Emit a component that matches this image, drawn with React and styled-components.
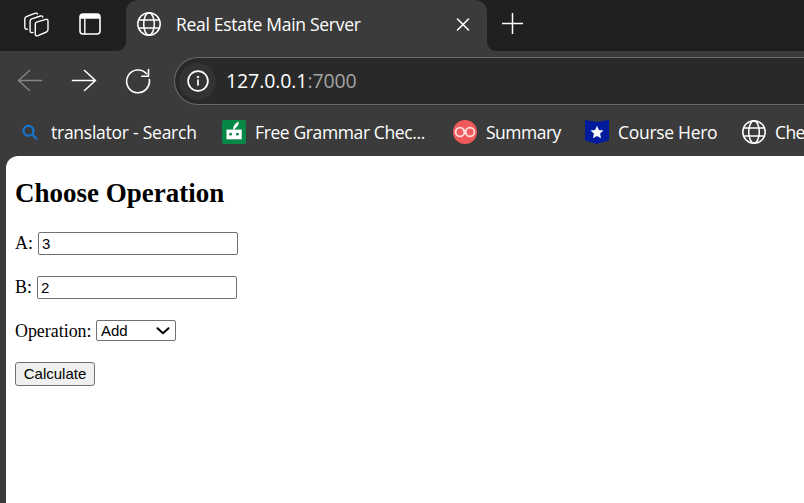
import React from "react";
import styled, { createGlobalStyle } from "styled-components";

const Global = createGlobalStyle`
  * { box-sizing: border-box; }
  body { margin: 0; overflow: hidden; background: #3b3b3b; }
`;

const Browser = styled.div`
  width: 804px;
  height: 503px;
  overflow: hidden;
  display: flex;
  flex-direction: column;
  background: #3b3b3b;
  color: #fff;
  font-family: "Open Sans", "Noto Sans", sans-serif;
  svg { display: block; flex: none; }
`;

const TabStrip = styled.header`
  height: 51px;
  flex: none;
  display: flex;
  background: #3b3b3b;
`;

const StripLeft = styled.div`
  width: 126px;
  display: flex;
  align-items: center;
  gap: 30px;
  padding: 0 0 3px 24px;
  background: #202020;
  border-bottom-right-radius: 9px;
`;

const TabBack = styled.div`
  width: 361px;
  background: linear-gradient(#202020 50%, #3b3b3b 50%);
`;

const Tab = styled.div`
  height: 51px;
  display: flex;
  align-items: center;
  padding: 0 17px 3px 11px;
  background: #3b3b3b;
  border-radius: 12px 12px 0 0;
`;

const TabTitle = styled.span`
  flex: 1;
  margin: -1px 0 0 15px;
  font-size: 17.5px;
  line-height: 24px;
  letter-spacing: -0.3px;
  white-space: nowrap;
`;

const StripRight = styled.div`
  flex: 1;
  display: flex;
  align-items: flex-start;
  padding: 13px 0 0 15px;
  background: #202020;
  border-bottom-left-radius: 9px;
`;

const Toolbar = styled.nav`
  height: 55px;
  flex: none;
  display: flex;
  align-items: center;
  padding: 5px 0 0 17px;
  gap: 28px;
`;

const AddressBar = styled.div`
  flex: 1;
  height: 48px;
  margin-left: -5px;
  display: flex;
  align-items: center;
  padding-left: 4px;
  background: #292929;
  border: 1.5px solid #6a6a6a;
  border-right: 0;
  border-radius: 24px 0 0 24px;
`;

const SiteInfo = styled.div`
  width: 37px;
  height: 37px;
  display: grid;
  place-items: center;
  border-radius: 50%;
  background: #333;
`;

const Url = styled.span`
  margin-left: 10px;
  font-size: 19.5px;
  line-height: 26px;
  letter-spacing: -0.1px;
`;

const Port = styled.span`
  color: #a3a3a3;
`;

const Bookmarks = styled.div`
  height: 50px;
  flex: none;
  display: flex;
  align-items: center;
  padding: 2px 0 0 18px;
`;

const Bookmark = styled.div`
  width: ${(p) => p.$width}px;
  flex: none;
  display: flex;
  align-items: center;
  gap: 9px;
`;

const BookmarkLabel = styled.span`
  margin-top: -1px;
  font-size: 17.5px;
  line-height: 24px;
  letter-spacing: ${(p) => p.$spacing}px;
  white-space: nowrap;
`;

const Page = styled.main`
  flex: 1;
  margin-left: 6px;
  padding: 20px 9px;
  background: #fff;
  color: #000;
  border-top-left-radius: 12px;
  font-family: "Liberation Serif", serif;
  font-size: 17.9px;
`;

const Heading = styled.h2`
  margin: 0;
  height: 56px;
  font-size: 27px;
  line-height: 34px;
`;

const Field = styled.div`
  height: ${(p) => p.$height}px;
  display: flex;
  align-items: flex-start;
  gap: ${(p) => p.$gap}px;
  line-height: 23px;
`;

const NumberInput = styled.input`
  width: 200px;
  height: 23px;
  margin: 0;
  padding: 1px 3px;
  border: 1px solid #707070;
  border-radius: 2px;
  background: #fff;
  color: #000;
  font: 15px "Liberation Sans", sans-serif;
  outline: 0;
`;

const SelectBox = styled.button`
  width: 80px;
  height: 21px;
  margin: 0;
  padding: 0 5px 0 4.5px;
  display: flex;
  align-items: center;
  justify-content: space-between;
  border: 1px solid #707070;
  border-radius: 2px;
  background: #fff;
  color: #000;
  font: 15px/19px "Liberation Sans", sans-serif;
`;

const CalculateButton = styled.button`
  width: 80px;
  height: 24px;
  margin: 0;
  padding: 0;
  border: 1px solid #707070;
  border-radius: 3px;
  background: #efefef;
  color: #000;
  font: 15px/20px "Liberation Sans", sans-serif;
`;

const Icon = ({ w = 24, h = w, box = `0 0 ${w} ${h}`, children, ...rest }) => (
  <svg width={w} height={h} viewBox={box} fill="none" stroke="#fff" strokeWidth="1.4" strokeLinecap="round" strokeLinejoin="round" {...rest}>
    {children}
  </svg>
);

const Globe = () => (
  <Icon strokeWidth="1.5">
    <circle cx="12" cy="12" r="11.2" />
    <ellipse cx="12" cy="12" rx="5.3" ry="11.2" />
    <path d="M1.6 8h20.8M1.6 16h20.8" />
  </Icon>
);

const Workspaces = () => (
  <Icon w={25} h={25}>
    <path d="M12.6 10.2 21.8 7.4Q24 6.9 24 9V17.5Q24 19.2 22.5 20L14 23.7Q11.3 24.5 11.3 22V12Q11.3 10.7 12.6 10.2Z" />
    <path d="M9 20.4Q6.1 21.4 6.1 18.7V9.2Q6.1 7.5 7.7 6.9L16.5 4Q18.6 3.4 18.8 5.2" />
    <path d="M3.5 17.1Q.8 17.7.8 15V7Q.8 5.4 2.3 4.7L10.7 1.4Q13 .6 13.5 2.1" />
  </Icon>
);

const VerticalTabs = () => (
  <Icon w={22} h={22}>
    <rect x="1" y="1" width="20" height="20" rx="3" strokeWidth="1.6" />
    <path d="M1 5.8V4Q1 1 4 1H18Q21 1 21 4V5.8Z" fill="#fff" stroke="none" />
    <path d="M5.8 6V21" />
  </Icon>
);

const SearchMark = () => (
  <Icon stroke="#1677d2" strokeWidth="2.2">
    <circle cx="10.5" cy="10.8" r="5" />
    <path d="m14.5 14.8 4 4" />
  </Icon>
);

const Robot = () => (
  <Icon stroke="none">
    <rect width="24" height="24" rx="2" fill="#078746" />
    <path d="M4.500 9.600H19.700V19.300H4.500Z" fill="#fff" />
    <path d="M11 9.600Q11.200 4 16.800 1.500Q17 5.500 13.300 8.200L12.600 9.600Z" fill="#fff" />
    <circle cx="8.600" cy="14.200" r="1.400" fill="#078746" />
    <circle cx="15.400" cy="14.200" r="1.400" fill="#078746" />
  </Icon>
);

const LinkedRings = () => (
  <Icon strokeWidth="1.800">
    <circle cx="12" cy="12" r="12" fill="#f05a5c" stroke="none" />
    <g stroke="#ffdcdc">
      <circle cx="7" cy="12" r="4.400" />
      <circle cx="17" cy="12" r="4.400" />
      <path d="M10.600 10.200 13.400 13.800" />
    </g>
  </Icon>
);

const Shield = () => (
  <Icon stroke="none">
    <path d="M0 0 12 2 24 0V20.500L12 24 0 20.500Z" fill="#001b9b" />
    <path d="m12 5.700 1.900 4.300 4.600.5-3.400 3.100.9 4.600-4-2.300-4 2.300.9-4.600-3.400-3.100 4.600-.5Z" fill="#fff" />
  </Icon>
);

const bookmarks = [
  { icon: <SearchMark />, label: "translator - Search", width: 204, spacing: -0.25 },
  { icon: <Robot />, label: "Free Grammar Chec...", width: 231, spacing: -0.38 },
  { icon: <LinkedRings />, label: "Summary", width: 132, spacing: -0.5 },
  { icon: <Shield />, label: "Course Hero", width: 157, spacing: -0.3 },
  { icon: <Globe />, label: "Che", width: 64, spacing: -0.6 },
];

export default function App() {
  return (
    <Browser>
      <Global />
      <TabStrip>
        <StripLeft>
          <Workspaces />
          <VerticalTabs />
        </StripLeft>
        <TabBack>
          <Tab>
            <Globe />
            <TabTitle>Real Estate Main Server</TabTitle>
            <Icon w={14} strokeWidth="1.6"><path d="m1.500 2 11 11m0-11-11 11" /></Icon>
          </Tab>
        </TabBack>
        <StripRight>
          <Icon w={21} strokeWidth="1.500"><path d="M10.500 0v21M0 10.500h21" strokeLinecap="butt" /></Icon>
        </StripRight>
      </TabStrip>
      <Toolbar>
        <Icon w={26} stroke="#858585" strokeWidth="1.500"><path d="M24.500 12.500H1.500M12.500 2.500 1.500 12.500l11 10" /></Icon>
        <Icon w={26} strokeWidth="1.600"><path d="M1.500 12.500h23M13.500 2.500l11 10-11 10" /></Icon>
        <Icon w={26} strokeWidth="1.600"><path d="M24.300 11.500A11.400 11.400 0 1 1 21.500 5.700M23.500 1.500v6.700h-6.700" /></Icon>
        <AddressBar>
          <SiteInfo>
            <Icon w={22} strokeWidth="1.700"><circle cx="11" cy="11" r="9.900" /><path d="M11 10v5" /><circle cx="11" cy="7" r=".4" /></Icon>
          </SiteInfo>
          <Url>127.0.0.1<Port>:7000</Port></Url>
        </AddressBar>
      </Toolbar>
      <Bookmarks>
        {bookmarks.map((b) => (
          <Bookmark key={b.label} $width={b.width}>
            {b.icon}
            <BookmarkLabel $spacing={b.spacing}>{b.label}</BookmarkLabel>
          </Bookmark>
        ))}
      </Bookmarks>
      <Page>
        <Heading>Choose Operation</Heading>
        <Field $height={44} $gap={5}>A: <NumberInput aria-label="A" defaultValue="3" /></Field>
        <Field $height={44} $gap={5}>B: <NumberInput aria-label="B" defaultValue="2" /></Field>
        <Field $height={42} $gap={4}>
          Operation:
          <SelectBox type="button">
            Add
            <Icon w={14} h={8} stroke="#000" strokeWidth="2"><path d="m1.500 1.200 5.500 5 5.500-5" /></Icon>
          </SelectBox>
        </Field>
        <CalculateButton type="button">Calculate</CalculateButton>
      </Page>
    </Browser>
  );
}
